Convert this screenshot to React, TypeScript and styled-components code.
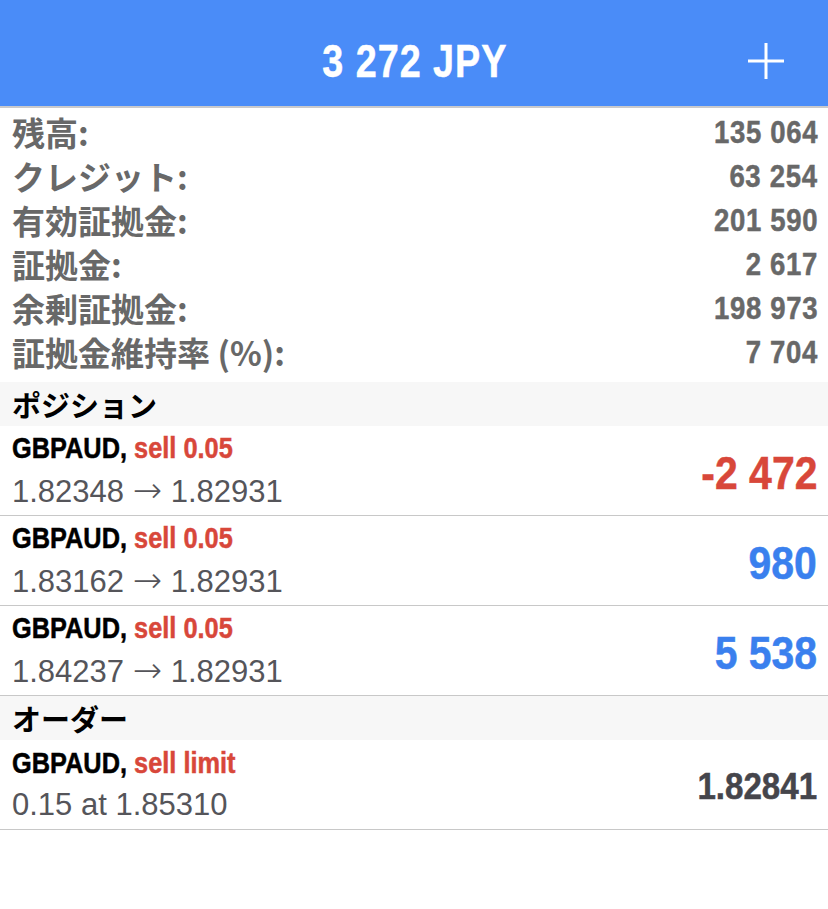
import React from "react";
import styled, { createGlobalStyle } from "styled-components";

const sans = `"Liberation Sans", "Noto Sans CJK JP", sans-serif`;
const cjk = `"Noto Sans CJK JP", "Liberation Sans", sans-serif`;

const GlobalStyle = createGlobalStyle`
  html, body {
    margin: 0;
    padding: 0;
    background: #ffffff;
  }
  body {
    font-family: ${sans};
  }
`;

type Summary = { label: string; value: string };
type Tone = "loss" | "profit" | "neutral";
type Trade = {
  symbol: string;
  action: string;
  from: string;
  to?: string;
  result: string;
  tone: Tone;
};

const summary: Summary[] = [
  { label: "残高:", value: "135 064" },
  { label: "クレジット:", value: "63 254" },
  { label: "有効証拠金:", value: "201 590" },
  { label: "証拠金:", value: "2 617" },
  { label: "余剰証拠金:", value: "198 973" },
  { label: "証拠金維持率 (%):", value: "7 704" },
];

const positions: Trade[] = [
  { symbol: "GBPAUD,", action: "sell 0.05", from: "1.82348", to: "1.82931", result: "-2 472", tone: "loss" },
  { symbol: "GBPAUD,", action: "sell 0.05", from: "1.83162", to: "1.82931", result: "980", tone: "profit" },
  { symbol: "GBPAUD,", action: "sell 0.05", from: "1.84237", to: "1.82931", result: "5 538", tone: "profit" },
];

const orders: Trade[] = [
  { symbol: "GBPAUD,", action: "sell limit", from: "0.15 at 1.85310", result: "1.82841", tone: "neutral" },
];

const toneColor: Record<Tone, string> = {
  loss: "#d8473a",
  profit: "#3a80ee",
  neutral: "#45454b",
};

function PlusIcon() {
  return (
    <svg width="36" height="36" viewBox="0 0 36 36" fill="none">
      <path d="M18 0V36M0 18H36" stroke="#ffffff" strokeWidth="3" />
    </svg>
  );
}

function TradeRow({ trade }: { trade: Trade }) {
  return (
    <Row>
      <RowText>
        <Title>
          <Condensed $scale={0.845}>
            {trade.symbol} <Action>{trade.action}</Action>
          </Condensed>
        </Title>
        <Detail>
          {trade.from}
          {trade.to && (
            <>
              {" "}
              <Arrow>→</Arrow> {trade.to}
            </>
          )}
        </Detail>
      </RowText>
      <Result $tone={trade.tone}>
        <Condensed $scale={trade.tone === "neutral" ? 0.92 : 0.89} $origin="right">
          {trade.result}
        </Condensed>
      </Result>
    </Row>
  );
}

export default function App() {
  return (
    <>
      <GlobalStyle />
      <Page>
        <Header>
          <HeaderTitle>
            <Condensed $scale={0.82} $origin="center" $spacing={1.2}>
              3 272 JPY
            </Condensed>
          </HeaderTitle>
          <AddButton>
            <PlusIcon />
          </AddButton>
        </Header>

        <SummaryList>
          {summary.map((s) => (
            <SummaryRow key={s.label}>
              <SummaryLabel>{s.label}</SummaryLabel>
              <SummaryValue>
                <Condensed $scale={0.86} $origin="right" $spacing={0.8}>
                  {s.value}
                </Condensed>
              </SummaryValue>
            </SummaryRow>
          ))}
        </SummaryList>

        <SectionHeader>ポジション</SectionHeader>
        {positions.map((p, i) => (
          <TradeRow key={i} trade={p} />
        ))}

        <SectionHeader>オーダー</SectionHeader>
        {orders.map((o, i) => (
          <TradeRow key={i} trade={o} />
        ))}
      </Page>
    </>
  );
}

// Helvetica Neue Condensed is not available, so narrowed Liberation Sans Bold stands in
const Condensed = styled.span<{ $scale: number; $origin?: string; $spacing?: number }>`
  display: inline-block;
  white-space: nowrap;
  transform: scaleX(${(p) => p.$scale});
  transform-origin: ${(p) => p.$origin ?? "left"} center;
  letter-spacing: ${(p) => p.$spacing ?? 0}px;
  margin-right: ${(p) => -(p.$spacing ?? 0)}px;
  -webkit-text-stroke: 0.5px currentColor;
`;

const Page = styled.div`
  width: 828px;
  min-height: 909px;
  background: #ffffff;
`;

const Header = styled.header`
  position: relative;
  height: 106px;
  background: #4a8cf8;
  border-bottom: 2px solid #c9c9cc;
  display: flex;
  align-items: center;
  justify-content: center;
`;

const HeaderTitle = styled.h1`
  margin: 0;
  padding-top: 16px;
  font-family: ${sans};
  font-weight: 700;
  font-size: 46px;
  line-height: 50px;
  color: #ffffff;
`;

const AddButton = styled.div`
  position: absolute;
  right: 44px;
  top: 43px;
  width: 36px;
  height: 36px;
  display: flex;
`;

const SummaryList = styled.div`
  padding: 2px 11px 8px 12px;
`;

const SummaryRow = styled.div`
  height: 44px;
  display: flex;
  align-items: center;
  justify-content: space-between;
  color: #686868;
`;

const SummaryLabel = styled.span`
  font-family: ${cjk};
  font-weight: 700;
  font-size: 33px;
  line-height: 40px;
`;

const SummaryValue = styled.span`
  font-family: ${sans};
  font-weight: 700;
  font-size: 32px;
  line-height: 40px;
`;

const SectionHeader = styled.div`
  height: 44px;
  padding: 0 12px;
  display: flex;
  align-items: center;
  background: #f7f7f7;
  color: #000000;
  font-family: ${cjk};
  font-weight: 700;
  font-size: 29px;
`;

const Row = styled.div`
  height: 89px;
  padding: 0 11px 0 12px;
  border-bottom: 1px solid #c8c8c8;
  display: flex;
  align-items: center;
  justify-content: space-between;
`;

const RowText = styled.div`
  display: flex;
  flex-direction: column;
  gap: 8px;
  padding-bottom: 2px;
`;

const Title = styled.div`
  font-family: ${sans};
  font-weight: 700;
  font-size: 30px;
  line-height: 34px;
  color: #000000;
`;

const Action = styled.span`
  color: #d8473a;
`;

const Detail = styled.div`
  font-family: ${sans};
  font-size: 31px;
  line-height: 34px;
  color: #55555a;
  white-space: nowrap;
`;

const Arrow = styled.span`
  font-family: "DejaVu Sans", sans-serif;
  font-size: 35px;
  font-weight: 300;
  line-height: 1;
`;

const Result = styled.div<{ $tone: Tone }>`
  font-family: ${sans};
  font-weight: 700;
  font-size: ${(p) => (p.$tone === "neutral" ? "36px" : "46px")};
  line-height: 1;
  color: ${(p) => toneColor[p.$tone]};
  padding-top: 4px;
`;
